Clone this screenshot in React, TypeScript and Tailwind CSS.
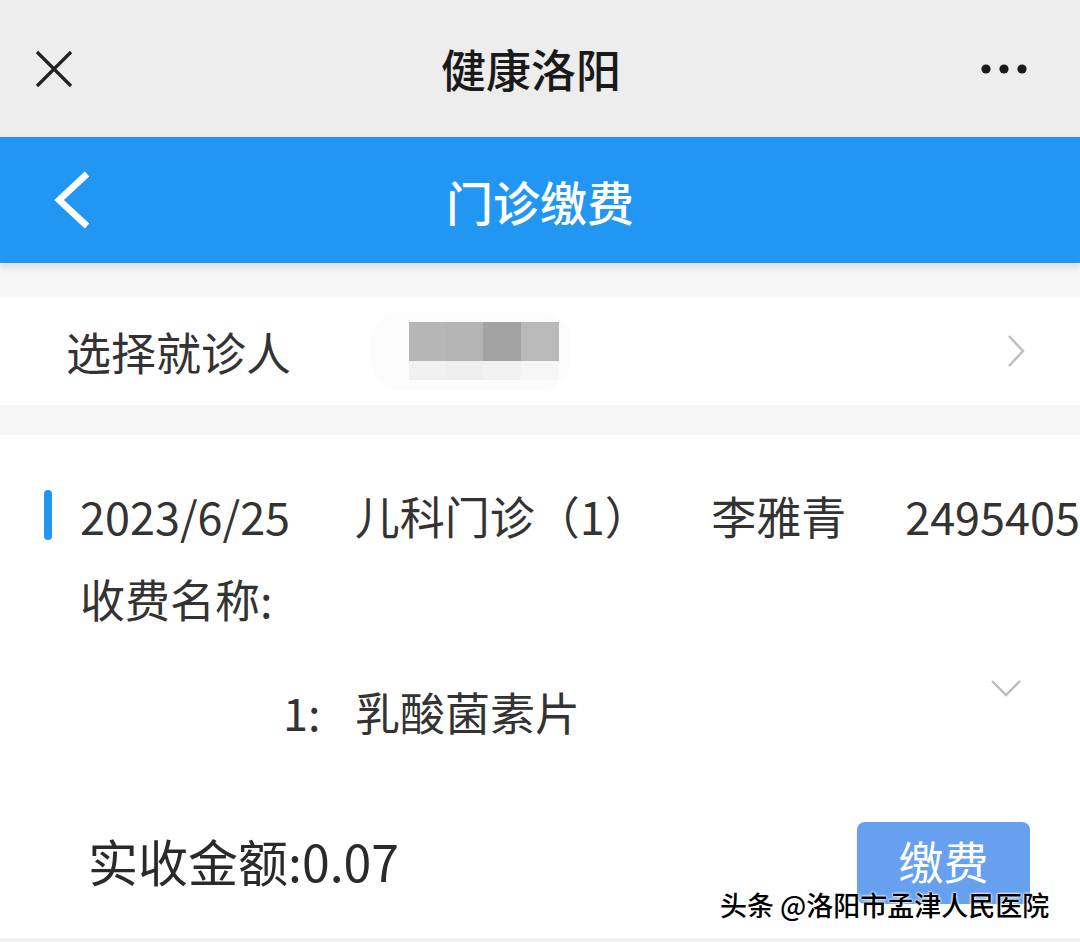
const font = { fontFamily: '"Noto Sans CJK SC", "Noto Sans", sans-serif' }

const CloseIcon = () => (
  <svg width="40" height="40" viewBox="0 0 40 40" className="ml-[34px]">
    <path d="M3 3 L37 37 M37 3 L3 37" stroke="#222" strokeWidth="3.2" fill="none" />
  </svg>
)

const MoreIcon = () => (
  <svg width="48" height="12" viewBox="0 0 48 12" className="mr-[52px]">
    <circle cx="6" cy="6" r="4.6" fill="#1a1a1a" />
    <circle cx="24" cy="6" r="4.6" fill="#1a1a1a" />
    <circle cx="42" cy="6" r="4.6" fill="#1a1a1a" />
  </svg>
)

const BackIcon = () => (
  <svg width="40" height="60" viewBox="0 0 40 60" className="ml-[52px]">
    <path d="M35 4 L7 30 L35 56" stroke="#fff" strokeWidth="6.5" fill="none" />
  </svg>
)

const Mosaic = () => (
  <div className="ml-[80px] flex h-[78px] w-[200px] items-center rounded-[30px] bg-[#fcfcfc]">
    <div className="ml-[38px] flex flex-col">
      <div className="flex h-[39px]">
        <div className="w-[37px] bg-[#b6b6b6]" />
        <div className="w-[37px] bg-[#b4b4b4]" />
        <div className="w-[38px] bg-[#a3a3a3]" />
        <div className="w-[38px] bg-[#b9b9b9]" />
      </div>
      <div className="flex h-[19px]">
        <div className="w-[37px] bg-[#f1f1f1]" />
        <div className="w-[37px] bg-[#efefef]" />
        <div className="w-[38px] bg-[#f2f2f2]" />
        <div className="w-[38px] bg-[#f6f6f6]" />
      </div>
    </div>
  </div>
)

export default function App() {
  return (
    <div style={font} className="relative flex h-[942px] w-[1080px] flex-col overflow-hidden bg-white text-[#333]">
      <div className="flex h-[137px] items-center justify-between bg-[#ededed]">
        <CloseIcon />
        <span className="ml-[8px] text-[45px] font-medium leading-none text-[#1a1a1a]">健康洛阳</span>
        <MoreIcon />
      </div>

      <div className="relative z-10 flex h-[126px] items-center bg-[#2196f3] shadow-[0_4px_8px_rgba(0,0,0,0.12)]">
        <BackIcon />
        <span className="absolute left-1/2 -translate-x-1/2 text-[47px] font-medium leading-none text-white">门诊缴费</span>
      </div>

      <div className="h-[34px] bg-[#f7f7f7]" />

      <div className="flex h-[108px] items-center bg-white pl-[66px]">
        <span className="text-[45px] leading-none">选择就诊人</span>
        <Mosaic />
        <svg width="20" height="34" viewBox="0 0 20 34" className="ml-auto mr-[54px]">
          <path d="M3 2 L17 17 L3 32" stroke="#bcbcbc" strokeWidth="2.4" fill="none" />
        </svg>
      </div>

      <div className="h-[30px] bg-[#f7f7f7]" />

      <div className="flex flex-1 flex-col bg-white">
        <div className="mt-[55px] flex h-[50px] items-center whitespace-nowrap text-[45px] leading-none">
          <div className="ml-[44px] h-[50px] w-[8px] rounded-full bg-[#2196f3]" />
          <span className="ml-[28px] w-[275px]">2023/6/25</span>
          <span className="w-[357px]">儿科门诊（1）</span>
          <span className="w-[194px]">李雅青</span>
          <span>2495405</span>
        </div>

        <div className="ml-[80px] mt-[34px] h-[50px] text-[45px] leading-[50px]">收费名称:</div>

        <div className="mt-[35px] flex h-[90px] items-start">
          <span className="ml-[283px] mt-[28px] w-[72px] text-[45px] leading-[50px]">1:</span>
          <span className="mt-[28px] text-[45px] leading-[50px]">乳酸菌素片</span>
          <svg width="32" height="20" viewBox="0 0 32 20" className="ml-auto mr-[58px] mt-[19px]">
            <path d="M2 3 L16 17 L30 3" stroke="#bcbcbc" strokeWidth="2.4" fill="none" />
          </svg>
        </div>

        <div className="mt-[73px] flex items-start">
          <span className="ml-[88px] mt-[12px] text-[50px] leading-[52px] text-[#2a2a2a]">实收金额:0.07</span>
          <div className="ml-auto mr-[50px] flex h-[82px] w-[173px] items-start justify-center rounded-[8px] bg-[#66a0ef] pt-[14px]">
            <span className="text-[45px] leading-[50px] text-white">缴费</span>
          </div>
        </div>
      </div>

      <div className="h-[4px] bg-[#f0f0f0]" />

      <div className="absolute left-[720px] top-[886px] text-[27px] font-medium leading-[38px] text-black [text-shadow:0_0_2px_#fff,0_0_2px_#fff,0_0_3px_#fff]">
        头条 @洛阳市孟津人民医院
      </div>
    </div>
  )
}
